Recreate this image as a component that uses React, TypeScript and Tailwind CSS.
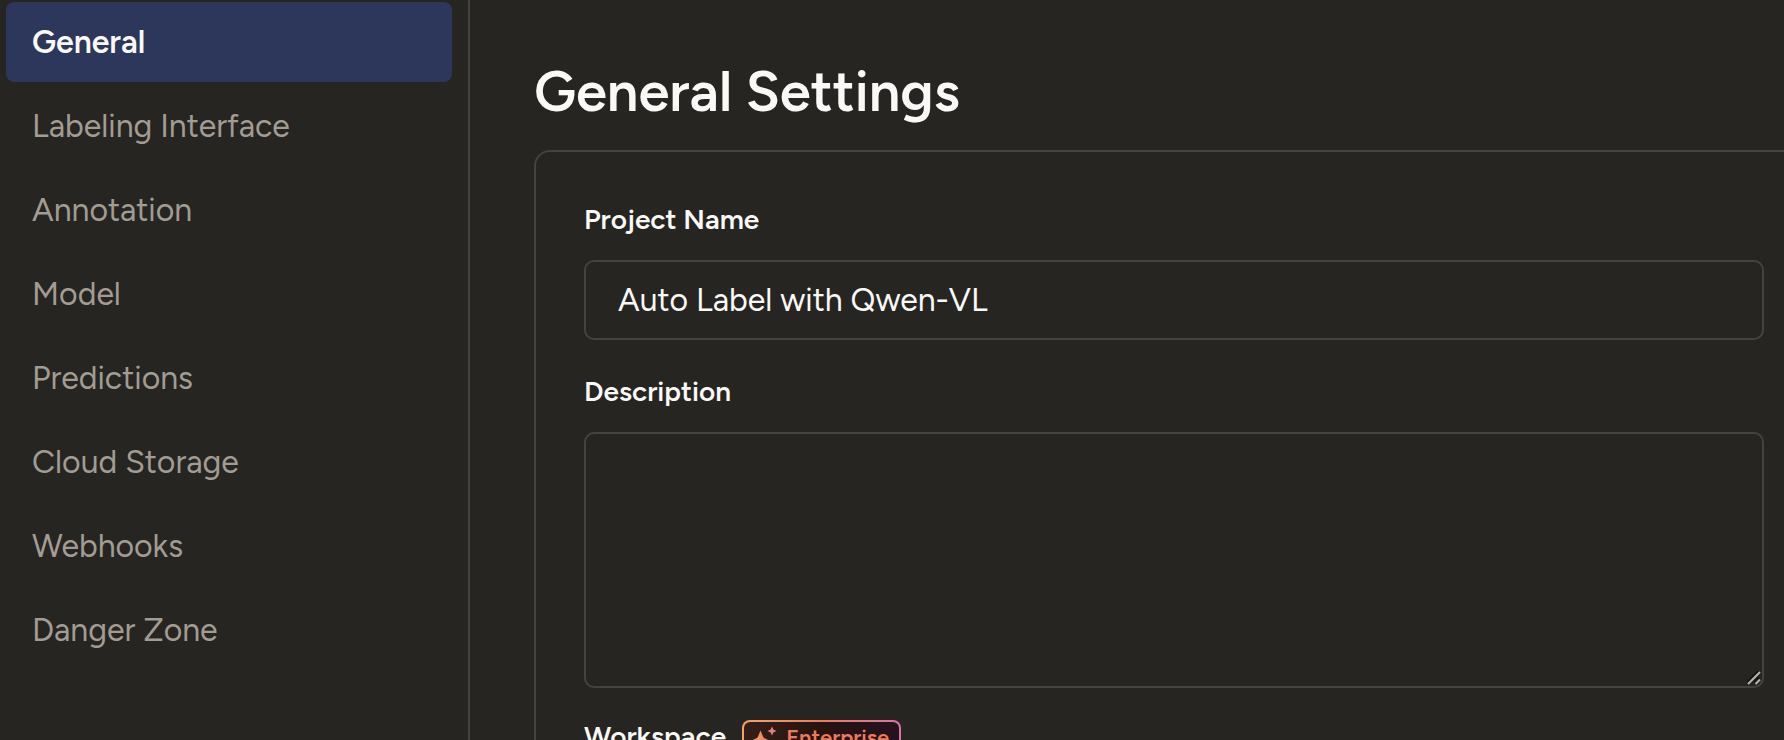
import { useState } from "react";

const NAV_ITEMS = [
  "General",
  "Labeling Interface",
  "Annotation",
  "Model",
  "Predictions",
  "Cloud Storage",
  "Webhooks",
  "Danger Zone",
];

function Sidebar() {
  const [active, setActive] = useState("General");

  return (
    <nav className="w-[470px] shrink-0 border-r-2 border-[#444340] pt-0.5 pl-1.5 pr-4">
      <ul className="flex flex-col gap-1">
        {NAV_ITEMS.map((item) => (
          <li key={item}>
            <a
              href="#"
              onClick={() => setActive(item)}
              className={`flex h-20 items-center rounded-lg px-[26px] text-[32px] leading-10 ${
                active === item ? "bg-[#2d365b] font-semibold text-[#faf9f7]" : "text-[#a29c92]"
              }`}
            >
              {item}
            </a>
          </li>
        ))}
      </ul>
    </nav>
  );
}

function EnterpriseBadge() {
  return (
    <span className="rounded-lg bg-linear-to-r from-[#f2a566] via-[#ee7a5c] to-[#d873a8] p-0.5">
      <span className="flex h-9 items-start gap-2 rounded-md bg-linear-to-r from-[#351f17] via-[#27130f] to-[#24121f] pl-1.5 pr-2.5">
        <svg viewBox="0 0 28 28" className="mt-1 size-7" aria-hidden="true">
          <defs>
            <linearGradient id="spark" x1="0" y1="0" x2="1" y2="0">
              <stop offset="0" stopColor="#f5a468" />
              <stop offset="1" stopColor="#ee7a5c" />
            </linearGradient>
          </defs>
          <path
            d="M10.5 4.500 L13 10.500 Q13.600 12 15 12.600 L21 15 L15 17.500 Q13.600 18 13 19.500 L10.500 25.500 L8 19.500 Q7.400 18 6 17.500 L0 15 L6 12.600 Q7.400 12 8 10.500 Z"
            fill="url(#spark)"
          />
          <path d="M22 0.500 L23.400 3.600 L26.500 5 L23.400 6.400 L22 9.500 L20.600 6.400 L17.500 5 L20.600 3.600 Z" fill="#e67c7c" />
        </svg>
        <span className="text-[22px] leading-8 font-semibold text-[#ee7a5c]">Enterprise</span>
      </span>
    </span>
  );
}

export default function App() {
  const [name, setName] = useState("Auto Label with Qwen-VL");
  const [description, setDescription] = useState("");

  return (
    <div className="flex h-screen overflow-hidden bg-[#262522] font-['Figtree','Lato',sans-serif] text-[#faf9f7]">
      <Sidebar />

      <main className="min-w-0 flex-1 pt-14 pl-16">
        <h1 className="mb-[22px] text-[56px] leading-18 font-semibold">General Settings</h1>

        {/* Card runs past the right edge of the window */}
        <form className="-mr-[30px] rounded-2xl border-2 border-[#444340] p-12">
          <div className="mb-8 flex flex-col gap-[22px]">
            <label htmlFor="name" className="text-[28px] leading-[38px] font-semibold">
              Project Name
            </label>
            <input
              id="name"
              type="text"
              value={name}
              onChange={(e) => setName(e.target.value)}
              className="h-20 w-full rounded-[10px] border-2 border-[#444340] bg-transparent px-8 text-[32px] outline-none"
            />
          </div>

          <div className="mb-8 flex flex-col gap-[22px]">
            <label htmlFor="description" className="text-[28px] leading-[38px] font-semibold">
              Description
            </label>
            <div className="relative flex">
              <textarea
                id="description"
                value={description}
                onChange={(e) => setDescription(e.target.value)}
                className="h-64 w-full resize-none rounded-[10px] border-2 border-[#444340] bg-transparent px-8 py-4 text-[32px] outline-none"
              />
              {/* Resize grip */}
              <svg viewBox="0 0 14 14" className="pointer-events-none absolute right-[3px] bottom-[3px] size-3.5" aria-hidden="true">
                <path d="M0 11.500 L11.500 0 M7 11.500 L12 6.500" stroke="#121211" strokeWidth="2" />
                <path d="M1 13 L13 1 M8.500 13 L13 8.500" stroke="#b4b4b2" strokeWidth="2" />
              </svg>
            </div>
          </div>

          <div className="flex items-start gap-4">
            <span className="text-[28px] leading-8 font-semibold">Workspace</span>
            <EnterpriseBadge />
          </div>
        </form>
      </main>
    </div>
  );
}
